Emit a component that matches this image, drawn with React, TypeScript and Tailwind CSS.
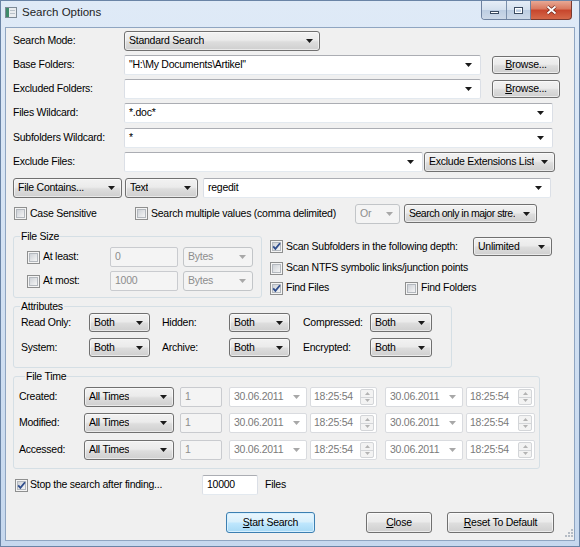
import React from 'react';

const Arrow = ({ dim }: { dim?: boolean }) => (
  <svg width="7" height="4" viewBox="0 0 7 4" className="shrink-0">
    <path d="M0 0H7L3.5 4Z" fill={dim ? '#a8a8a8' : '#1a1a1a'} />
  </svg>
);

const Select = ({ w, text, h = 'h-[20px]', tight }: { w: string; text: string; h?: string; tight?: boolean }) => (
  <div
    className={`${w} ${h} shrink-0 flex items-center justify-between pl-[4px] pr-[6px] rounded-[3px] border border-[#707070] bg-[linear-gradient(#f2f2f2,#ebebeb_45%,#dddddd_55%,#cfcfcf)] shadow-[inset_0_0_0_1px_rgba(255,255,255,0.55)]`}
  >
    <span className={`whitespace-nowrap overflow-hidden mr-[2px] ${tight ? 'tracking-[-0.5px]' : ''}`}>{text}</span>
    <Arrow />
  </div>
);

const DimSelect = ({ w, text }: { w: string; text: string }) => (
  <div className={`${w} h-[20px] shrink-0 flex items-center justify-between pl-[4px] pr-[6px] rounded-[3px] border border-[#c2c5c8] bg-[#f4f4f4] text-[#8d8d8d]`}>
    <span>{text}</span>
    <Arrow dim />
  </div>
);

const Combo = ({ w, text = '' }: { w: string; text?: string }) => (
  <div className={`${w} h-[20px] shrink-0 flex items-center justify-between bg-white border border-[#abadb3] border-x-[#dbdfe6] border-b-[#e3e9ef] rounded-[2px] pl-[4px] pr-[8px]`}>
    <span>{text}</span>
    <Arrow />
  </div>
);

const TextBox = ({ w, text, dim }: { w: string; text: string; dim?: boolean }) => (
  <div
    className={`${w} h-[20px] shrink-0 flex items-center border rounded-[2px] pl-[4px] ${
      dim ? 'bg-[#f4f4f4] border-[#c9cbcf] text-[#8d8d8d]' : 'bg-white border-[#abadb3] border-x-[#dbdfe6] border-b-[#e3e9ef]'
    }`}
  >
    {text}
  </div>
);

const DateBox = ({ w }: { w: string }) => (
  <div className={`${w} h-[20px] shrink-0 flex items-center justify-between bg-white border border-[#d9dbdf] rounded-[2px] pl-[4px] pr-[6px] text-[#7a7a7a]`}>
    <span>30.06.2011</span>
    <Arrow dim />
  </div>
);

const TimeBox = ({ w }: { w: string }) => (
  <div className={`${w} h-[20px] shrink-0 flex items-center justify-between bg-white border border-[#d9dbdf] rounded-[2px] pl-[3px] pr-[2px] text-[#7a7a7a]`}>
    <span>18:25:54</span>
    <div className="w-[14px] h-[16px] flex flex-col border border-[#d3d5d8] rounded-[2px] bg-[#f3f3f3]">
      <div className="flex-1 flex items-center justify-center border-b border-[#d3d5d8]">
        <svg width="5" height="3" viewBox="0 0 5 3"><path d="M0 3H5L2.5 0Z" fill="#b3b3b3" /></svg>
      </div>
      <div className="flex-1 flex items-center justify-center">
        <svg width="5" height="3" viewBox="0 0 5 3"><path d="M0 0H5L2.5 3Z" fill="#b3b3b3" /></svg>
      </div>
    </div>
  </div>
);

const Button = ({ w, children, def, h = 'h-[21px]' }: { w: string; children: React.ReactNode; def?: boolean; h?: string }) => (
  <div
    className={`${w} ${h} shrink-0 flex items-center justify-center rounded-[3px] border ${
      def
        ? 'border-[#3c7fb1] bg-[linear-gradient(#eaf6fd,#d9f0fc_45%,#bee6fd_55%,#a7d9f5)] shadow-[inset_0_0_0_1px_#d6f0ff]'
        : 'border-[#707070] bg-[linear-gradient(#f2f2f2,#ebebeb_45%,#dddddd_55%,#cfcfcf)] shadow-[inset_0_0_0_1px_rgba(255,255,255,0.6)]'
    }`}
  >
    {children}
  </div>
);

const Check = ({ on }: { on?: boolean }) => (
  <svg width="13" height="13" viewBox="0 0 13 13" className="shrink-0">
    <defs>
      <linearGradient id="cbg" x1="0" y1="0" x2="1" y2="1">
        <stop offset="0" stopColor="#cbcfd5" />
        <stop offset="1" stopColor="#f7f7f7" />
      </linearGradient>
    </defs>
    <rect x="0.5" y="0.5" width="12" height="12" fill="#f4f4f4" stroke="#8e8f8f" />
    <rect x="2.5" y="2.5" width="8" height="8" fill="url(#cbg)" stroke="#b3b8be" />
    {on && <path d="M3.2 6.4L5.4 8.9L10 3.3" fill="none" stroke="#2f4d8c" strokeWidth="1.8" />}
  </svg>
);

const Group = ({ title, className, children }: { title: string; className: string; children: React.ReactNode }) => (
  <fieldset className={`border border-[#d5dfe5] rounded-[3px] shrink-0 ${className}`}>
    <legend className="ml-[6px] px-[1px] leading-[13px]">{title}</legend>
    {children}
  </fieldset>
);

const Row = ({ label, children, mt }: { label: string; children: React.ReactNode; mt: string }) => (
  <div className={`flex items-center h-[20px] ${mt}`}>
    <div className="w-[111px] shrink-0">{label}</div>
    {children}
  </div>
);

const TimeRow = ({ label, mt }: { label: string; mt: string }) => (
  <div className={`flex items-center h-[20px] ${mt}`}>
    <div className="w-[65px] shrink-0">{label}</div>
    <Select w="w-[90px]" text="All Times" />
    <div className="ml-[6px]">
      <TextBox w="w-[42px]" text="1" dim />
    </div>
    <div className="ml-[7px]">
      <DateBox w="w-[78px]" />
    </div>
    <div className="ml-[3px]">
      <TimeBox w="w-[67px]" />
    </div>
    <div className="ml-[8px]">
      <DateBox w="w-[78px]" />
    </div>
    <div className="ml-[3px]">
      <TimeBox w="w-[69px]" />
    </div>
  </div>
);

const AttrRow = ({ items, mt }: { items: string[]; mt: string }) => (
  <div className={`flex items-center h-[19px] pl-[7px] ${mt}`}>
    <div className="w-[68px]">{items[0]}</div>
    <Select w="w-[61px]" h="h-[19px]" text="Both" />
    <div className="w-[67px] ml-[12px]">{items[1]}</div>
    <Select w="w-[61px]" h="h-[19px]" text="Both" />
    <div className="w-[67px] ml-[13px]">{items[2]}</div>
    <Select w="w-[62px]" h="h-[19px]" text="Both" />
  </div>
);

export default function App() {
  return (
    <div className="w-[580px] h-[547px] flex flex-col bg-[linear-gradient(to_bottom,#dfeaf7,#c6d8ee)] border border-[#6a84a6] font-['Liberation_Sans',Arial,sans-serif] text-[10.5px] tracking-[-0.25px] text-black overflow-hidden">
      {/* title bar */}
      <div className="h-[26px] flex items-start shrink-0">
        <div className="flex items-center h-[23px] pl-[4px]">
          <svg width="12" height="11" viewBox="0 0 12 11">
            <rect x="0.5" y="0.5" width="11" height="10" fill="#e9ecef" stroke="#7d8a96" />
            <rect x="1" y="1" width="3" height="9" fill="#3f8a6a" />
            <rect x="5" y="3" width="5" height="1" fill="#b9c2ca" />
            <rect x="5" y="6" width="5" height="1" fill="#b9c2ca" />
          </svg>
          <span className="ml-[5px] text-[11.5px] tracking-normal text-[#1e1e1e]">Search Options</span>
        </div>
        <div className="ml-auto mr-[7px] flex">
          <div className="flex h-[19px] border border-t-0 border-[#6e82a0] rounded-bl-[4px] overflow-hidden">
            <div className="w-[24px] flex items-center justify-center bg-[linear-gradient(#e6eef7,#d4e0ee_50%,#bccde2_50%,#cdd9e8)]">
              <div className="w-[9px] h-[3px] mt-[5px] bg-white border border-[#3a4a60]" />
            </div>
            <div className="w-[24px] flex items-center justify-center border-l border-[#7a8fab] bg-[linear-gradient(#e6eef7,#d4e0ee_50%,#bccde2_50%,#cdd9e8)]">
              <div className="w-[9px] h-[7px] border border-[#3a4a60] bg-transparent shadow-[inset_0_0_0_1px_#fff]" />
            </div>
          </div>
          <div className="w-[41px] h-[19px] flex items-center justify-center border border-t-0 border-l-0 border-[#7a3a30] rounded-br-[4px] bg-[linear-gradient(#e8a894,#d9775d_45%,#c7452c_50%,#d5694a)]">
            <svg width="11" height="10" viewBox="0 0 11 10">
              <path d="M1.5 1.5L9.5 8.5M9.5 1.5L1.5 8.5" stroke="#6b231a" strokeWidth="3.2" />
              <path d="M1.5 1.5L9.5 8.5M9.5 1.5L1.5 8.5" stroke="#fff" strokeWidth="1.8" />
            </svg>
          </div>
        </div>
      </div>

      {/* client area */}
      <div className="flex-1 mx-[4px] mb-[5px] bg-[#f0f0f0] border border-[#8fa5c1] relative flex flex-col pl-[7px]">
        <Row label="Search Mode:" mt="mt-[3px]">
          <Select w="w-[196px]" text="Standard Search" />
        </Row>
        <Row label="Base Folders:" mt="mt-[4px]">
          <Combo w="w-[357px]" text={'"H:\\My Documents\\Artikel"'} />
          <div className="ml-[11px]">
            <Button w="w-[68px]" h="h-[18px]">
              <span>
                <u>B</u>rowse...
              </span>
            </Button>
          </div>
        </Row>
        <Row label="Excluded Folders:" mt="mt-[4px]">
          <Combo w="w-[357px]" />
          <div className="ml-[11px]">
            <Button w="w-[68px]" h="h-[18px]">
              <span>
                <u>B</u>rowse...
              </span>
            </Button>
          </div>
        </Row>
        <Row label="Files Wildcard:" mt="mt-[4px]">
          <Combo w="w-[429px]" text="*.doc*" />
        </Row>
        <Row label="Subfolders Wildcard:" mt="mt-[5px]">
          <Combo w="w-[429px]" text="*" />
        </Row>
        <Row label="Exclude Files:" mt="mt-[4px]">
          <Combo w="w-[299px]" />
          <div className="ml-[1px]">
            <Select w="w-[131px]" text="Exclude Extensions List" />
          </div>
        </Row>
        <div className="flex items-center h-[20px] mt-[6px]">
          <Select w="w-[109px]" text="File Contains..." />
          <div className="ml-[3px]">
            <Select w="w-[73px]" text="Text" />
          </div>
          <div className="ml-[5px]">
            <Combo w="w-[348px]" text="regedit" />
          </div>
        </div>
        <div className="flex items-center h-[19px] mt-[6px]">
          <div className="ml-[1px] flex items-center w-[121px]">
            <Check />
            <span className="ml-[3px]">Case Sensitive</span>
          </div>
          <div className="flex items-center w-[220px]">
            <Check />
            <span className="ml-[3px]">Search multiple values (comma delimited)</span>
          </div>
          <DimSelect w="w-[45px]" text="Or" />
          <div className="ml-[4px]">
            <Select w="w-[133px]" h="h-[19px]" text="Search only in major stre." tight />
          </div>
        </div>

        {/* file size + scan options */}
        <div className="flex mt-[7px]">
          <Group title="File Size" className="w-[249px] pb-[6px]">
            <div className="flex items-center h-[20px] mt-[4px] pl-[13px]">
              <Check />
              <span className="ml-[3px] w-[67px]">At least:</span>
              <TextBox w="w-[68px]" text="0" dim />
              <div className="ml-[5px]">
                <DimSelect w="w-[70px]" text="Bytes" />
              </div>
            </div>
            <div className="flex items-center h-[20px] mt-[4px] pl-[13px]">
              <Check />
              <span className="ml-[3px] w-[67px]">At most:</span>
              <TextBox w="w-[68px]" text="1000" dim />
              <div className="ml-[5px]">
                <DimSelect w="w-[70px]" text="Bytes" />
              </div>
            </div>
          </Group>
          <div className="ml-[8px] pt-[7px] flex flex-col">
            <div className="flex items-center h-[19px]">
              <Check on />
              <span className="ml-[3px] w-[187px]">Scan Subfolders in the following depth:</span>
              <Select w="w-[79px]" h="h-[19px]" text="Unlimited" />
            </div>
            <div className="flex items-center h-[16px] mt-[4px]">
              <Check />
              <span className="ml-[3px]">Scan NTFS symbolic links/junction points</span>
            </div>
            <div className="flex items-center h-[16px] mt-[4px]">
              <Check on />
              <span className="ml-[3px] w-[119px]">Find Files</span>
              <Check />
              <span className="ml-[3px]">Find Folders</span>
            </div>
          </div>
        </div>

        {/* attributes */}
        <Group title="Attributes" className="w-[439px] mt-[2px] pb-[10px]">
          <AttrRow items={['Read Only:', 'Hidden:', 'Compressed:']} mt="mt-[0px]" />
          <AttrRow items={['System:', 'Archive:', 'Encrypted:']} mt="mt-[6px]" />
        </Group>

        {/* file time */}
        <Group title="File Time" className="w-[527px] mt-[2px] pb-[8px] pl-[5px]">
          <TimeRow label="Created:" mt="mt-[4px]" />
          <TimeRow label="Modified:" mt="mt-[6px]" />
          <TimeRow label="Accessed:" mt="mt-[7px]" />
        </Group>

        <div className="flex items-center h-[20px] mt-[6px]">
          <div className="ml-[2px] flex items-center w-[187px]">
            <Check on />
            <span className="ml-[2px]">Stop the search after finding...</span>
          </div>
          <TextBox w="w-[56px]" text="10000" />
          <span className="ml-[7px]">Files</span>
        </div>

        <div className="flex items-center mt-[17px]">
          <div className="ml-[213px]">
            <Button w="w-[89px]" def>
              <span>
                <u>S</u>tart Search
              </span>
            </Button>
          </div>
          <div className="ml-[51px]">
            <Button w="w-[66px]">
              <span>
                <u>C</u>lose
              </span>
            </Button>
          </div>
          <div className="ml-[15px]">
            <Button w="w-[107px]">
              <span>
                <u>R</u>eset To Default
              </span>
            </Button>
          </div>
        </div>

        <svg width="11" height="11" viewBox="0 0 11 11" className="absolute right-[1px] bottom-[1px]">
          {[
            [9, 1],
            [9, 4],
            [9, 7],
            [6, 4],
            [6, 7],
            [3, 7],
          ].map(([x, y], i) => (
            <rect key={i} x={x} y={y} width="2" height="2" fill="#b5bcc5" />
          ))}
        </svg>
      </div>
    </div>
  );
}
